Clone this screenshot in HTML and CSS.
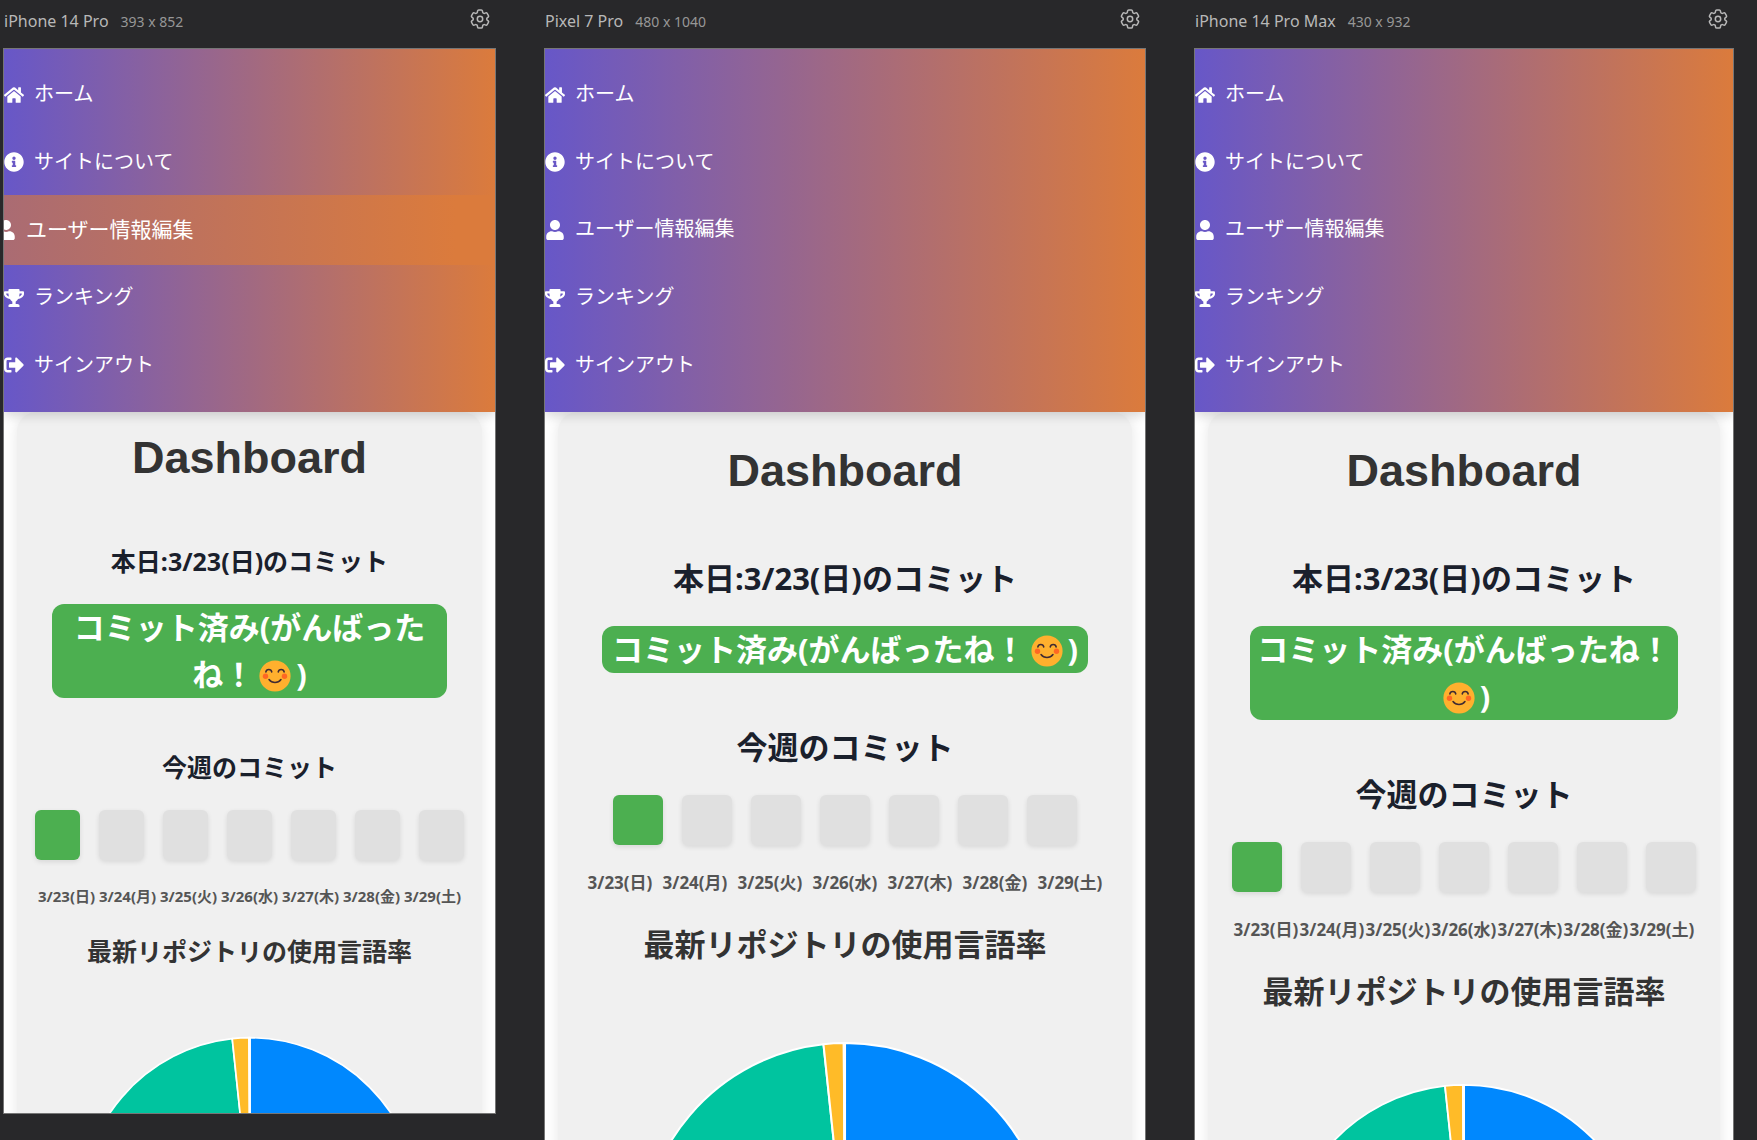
FILE: index.html
```html
<!DOCTYPE html>
<html lang="ja">
<head>
    <meta charset="UTF-8">
    <meta name="viewport" content="width=device-width, initial-scale=1.0">
    <title>Dashboard</title>
    <link rel="stylesheet" href="styles.css">
</head>
<body>
    <!-- shared icons -->
    <svg class="sprite" aria-hidden="true">
        <symbol id="gear" viewBox="2 2 20 20">
            <path fill="none" stroke="currentColor" stroke-width="1.5" stroke-linejoin="round" d="M9.594 3.94c.09-.542.56-.94 1.11-.94h2.593c.55 0 1.02.398 1.11.94l.213 1.281c.063.374.313.686.645.87.074.04.147.083.22.127.325.196.72.257 1.075.124l1.217-.456a1.125 1.125 0 0 1 1.37.49l1.296 2.247a1.125 1.125 0 0 1-.26 1.431l-1.003.827c-.293.241-.438.613-.43.992a7.723 7.723 0 0 1 0 .255c-.008.378.137.75.43.991l1.004.827c.424.35.534.955.26 1.43l-1.298 2.247a1.125 1.125 0 0 1-1.369.491l-1.217-.456c-.355-.133-.75-.072-1.076.124a6.47 6.47 0 0 1-.22.128c-.331.183-.581.495-.644.869l-.213 1.281c-.09.543-.56.94-1.11.94h-2.594c-.55 0-1.019-.398-1.11-.94l-.213-1.281c-.062-.374-.312-.686-.644-.87a6.52 6.52 0 0 1-.22-.127c-.325-.196-.72-.257-1.076-.124l-1.217.456a1.125 1.125 0 0 1-1.369-.49l-1.297-2.247a1.125 1.125 0 0 1 .26-1.431l1.004-.827c.292-.24.437-.613.43-.991a6.932 6.932 0 0 1 0-.255c.007-.38-.138-.751-.43-.992l-1.004-.827a1.125 1.125 0 0 1-.26-1.43l1.297-2.247a1.125 1.125 0 0 1 1.37-.491l1.216.456c.356.133.751.072 1.076-.124.072-.044.146-.086.22-.128.332-.183.582-.495.644-.869l.214-1.28Z"/>
            <circle cx="12" cy="12" r="2.7" fill="none" stroke="currentColor" stroke-width="1.5"/>
        </symbol>
        <symbol id="home" viewBox="0 0 576 512">
            <path d="M280.37 148.26L96 300.11V464a16 16 0 0 0 16 16l112.06-.29a16 16 0 0 0 15.92-16V368a16 16 0 0 1 16-16h64a16 16 0 0 1 16 16v95.64a16 16 0 0 0 16 16.05L464 480a16 16 0 0 0 16-16V300L295.67 148.26a12.19 12.19 0 0 0-15.3 0zM571.6 251.47L488 182.56V44.05a12 12 0 0 0-12-12h-56a12 12 0 0 0-12 12v72.61L318.47 43a48 48 0 0 0-61 0L4.34 251.47a12 12 0 0 0-1.6 16.9l25.5 31A12 12 0 0 0 45.15 301l235.22-193.74a12.19 12.19 0 0 1 15.3 0L530.9 301a12 12 0 0 0 16.9-1.6l25.5-31a12 12 0 0 0-1.7-16.93z"/>
        </symbol>
        <symbol id="info" viewBox="0 0 512 512">
            <path d="M256 8C119.043 8 8 119.083 8 256c0 136.997 111.043 248 248 248s248-111.003 248-248C504 119.083 392.957 8 256 8zm0 110c23.196 0 42 18.804 42 42s-18.804 42-42 42-42-18.804-42-42 18.804-42 42-42zm56 254c0 6.627-5.373 12-12 12h-88c-6.627 0-12-5.373-12-12v-24c0-6.627 5.373-12 12-12h12v-64h-12c-6.627 0-12-5.373-12-12v-24c0-6.627 5.373-12 12-12h64c6.627 0 12 5.373 12 12v100h12c6.627 0 12 5.373 12 12v24z"/>
        </symbol>
        <symbol id="user" viewBox="0 0 448 512">
            <path d="M224 256c70.7 0 128-57.3 128-128S294.7 0 224 0 96 57.3 96 128s57.3 128 128 128zm89.6 32h-16.7c-22.2 10.2-46.9 16-72.9 16s-50.6-5.8-72.9-16h-16.7C60.2 288 0 348.2 0 422.4V464c0 26.5 21.5 48 48 48h352c26.5 0 48-21.5 48-48v-41.6c0-74.2-60.2-134.4-134.4-134.4z"/>
        </symbol>
        <symbol id="trophy" viewBox="0 0 576 512">
            <path d="M552 64H448V24c0-13.3-10.7-24-24-24H152c-13.3 0-24 10.7-24 24v40H24C10.7 64 0 74.7 0 88v56c0 35.7 22.5 72.4 61.9 100.7 31.5 22.7 69.8 37.1 110 41.7C203.3 338.5 240 360 240 360v72h-48c-35.3 0-64 20.7-64 56v12c0 6.6 5.4 12 12 12h296c6.6 0 12-5.4 12-12v-12c0-35.3-28.7-56-64-56h-48v-72s36.7-21.5 68.1-73.6c40.3-4.6 78.6-19 110-41.7 39.3-28.3 61.9-65 61.9-100.7V88c0-13.3-10.7-24-24-24zM99.3 192.8C74.9 175.2 64 155.6 64 144v-16h64.2c1 32.6 5.8 61.2 12.8 86.2-15.1-5.2-29.2-12.4-41.7-21.4zM512 144c0 16.1-17.7 36.1-35.3 48.8-12.5 9-26.7 16.2-41.8 21.4 7-25 11.8-53.6 12.8-86.2H512v16z"/>
        </symbol>
        <symbol id="signout" viewBox="0 0 512 512">
            <path d="M497 273L329 441c-15 15-41 4.5-41-17v-96H152c-13.3 0-24-10.7-24-24v-96c0-13.3 10.7-24 24-24h136V88c0-21.4 25.9-32 41-17l168 168c9.3 9.4 9.3 24.6 0 34zM192 436v-40c0-6.6-5.4-12-12-12H96c-17.7 0-32-14.3-32-32V160c0-17.7 14.3-32 32-32h84c6.6 0 12-5.4 12-12V76c0-6.6-5.4-12-12-12H96c-53 0-96 43-96 96v192c0 53 43 96 96 96h84c6.6 0 12-5.4 12-12z"/>
        </symbol>
        <symbol id="smile" viewBox="0 0 32 32">
            <circle cx="16" cy="16" r="15.6" fill="#ffb02e"/>
            <circle cx="6.5" cy="16.3" r="2.7" fill="#ff6723"/>
            <circle cx="25.5" cy="16.3" r="2.7" fill="#ff6723"/>
            <path fill="none" stroke="#402a32" stroke-width="1.5" stroke-linecap="round" d="M6.8 12c.6-3.400 5.400-3.400 6 0M19.200 12c.6-3.400 5.400-3.400 6 0M10 19.500c3 4 9 4 12 0"/>
        </symbol>
        <symbol id="pie" viewBox="-101 -101 202 202">
            <path class="slice-blue" d="M0 0V-100A100 100 0 0 1 0 100Z"/>
            <path class="slice-teal" d="M0 0V100A100 100 0 0 1 -10.5 -99.4Z"/>
            <path class="slice-yellow" d="M0 0L-10.5 -99.4A100 100 0 0 1 -.6 -100Z"/>
            <path class="slice-orange" d="M0 0L-.6 -100H0Z"/>
        </symbol>
    </svg>

    <div class="workspace">
        <section class="device iphone-pro">
            <header class="device-bar">
                <span class="device-name">iPhone 14 Pro</span>
                <span class="device-size">393 x 852</span>
                <button type="button" class="gear" aria-label="Settings"><svg><use href="#gear"/></svg></button>
            </header>
            <div class="screen">
                <nav class="menu">
                    <ul>
                        <li><a href="#"><svg><use href="#home"/></svg>ホーム</a></li>
                        <li><a href="#"><svg><use href="#info"/></svg>サイトについて</a></li>
                        <li><a href="#" class="active"><svg><use href="#user"/></svg>ユーザー情報編集</a></li>
                        <li><a href="#"><svg><use href="#trophy"/></svg>ランキング</a></li>
                        <li><a href="#"><svg><use href="#signout"/></svg>サインアウト</a></li>
                    </ul>
                </nav>
                <main class="card">
                    <h1>Dashboard</h1>
                    <h2>本日:3/23(日)のコミット</h2>
                    <p class="status">コミット済み(がんばったね！<svg role="img" aria-label="😊"><use href="#smile"/></svg>)</p>
                    <h2>今週のコミット</h2>
                    <div class="week">
                        <span class="day done"></span>
                        <span class="day"></span>
                        <span class="day"></span>
                        <span class="day"></span>
                        <span class="day"></span>
                        <span class="day"></span>
                        <span class="day"></span>
                    </div>
                    <div class="dates">
                        <span>3/23(日)</span>
                        <span>3/24(月)</span>
                        <span>3/25(火)</span>
                        <span>3/26(水)</span>
                        <span>3/27(木)</span>
                        <span>3/28(金)</span>
                        <span>3/29(土)</span>
                    </div>
                    <h2 class="languages">最新リポジトリの使用言語率</h2>
                    <svg class="chart"><use href="#pie"/></svg>
                </main>
            </div>
        </section>

        <section class="device pixel-pro">
            <header class="device-bar">
                <span class="device-name">Pixel 7 Pro</span>
                <span class="device-size">480 x 1040</span>
                <button type="button" class="gear" aria-label="Settings"><svg><use href="#gear"/></svg></button>
            </header>
            <div class="screen">
                <nav class="menu">
                    <ul>
                        <li><a href="#"><svg><use href="#home"/></svg>ホーム</a></li>
                        <li><a href="#"><svg><use href="#info"/></svg>サイトについて</a></li>
                        <li><a href="#"><svg><use href="#user"/></svg>ユーザー情報編集</a></li>
                        <li><a href="#"><svg><use href="#trophy"/></svg>ランキング</a></li>
                        <li><a href="#"><svg><use href="#signout"/></svg>サインアウト</a></li>
                    </ul>
                </nav>
                <main class="card">
                    <h1>Dashboard</h1>
                    <h2>本日:3/23(日)のコミット</h2>
                    <p class="status">コミット済み(がんばったね！<svg role="img" aria-label="😊"><use href="#smile"/></svg>)</p>
                    <h2>今週のコミット</h2>
                    <div class="week">
                        <span class="day done"></span>
                        <span class="day"></span>
                        <span class="day"></span>
                        <span class="day"></span>
                        <span class="day"></span>
                        <span class="day"></span>
                        <span class="day"></span>
                    </div>
                    <div class="dates">
                        <span>3/23(日)</span>
                        <span>3/24(月)</span>
                        <span>3/25(火)</span>
                        <span>3/26(水)</span>
                        <span>3/27(木)</span>
                        <span>3/28(金)</span>
                        <span>3/29(土)</span>
                    </div>
                    <h2 class="languages">最新リポジトリの使用言語率</h2>
                    <svg class="chart"><use href="#pie"/></svg>
                </main>
            </div>
        </section>

        <section class="device iphone-max">
            <header class="device-bar">
                <span class="device-name">iPhone 14 Pro Max</span>
                <span class="device-size">430 x 932</span>
                <button type="button" class="gear" aria-label="Settings"><svg><use href="#gear"/></svg></button>
            </header>
            <div class="screen">
                <nav class="menu">
                    <ul>
                        <li><a href="#"><svg><use href="#home"/></svg>ホーム</a></li>
                        <li><a href="#"><svg><use href="#info"/></svg>サイトについて</a></li>
                        <li><a href="#"><svg><use href="#user"/></svg>ユーザー情報編集</a></li>
                        <li><a href="#"><svg><use href="#trophy"/></svg>ランキング</a></li>
                        <li><a href="#"><svg><use href="#signout"/></svg>サインアウト</a></li>
                    </ul>
                </nav>
                <main class="card">
                    <h1>Dashboard</h1>
                    <h2>本日:3/23(日)のコミット</h2>
                    <p class="status">コミット済み(がんばったね！<svg role="img" aria-label="😊"><use href="#smile"/></svg>)</p>
                    <h2>今週のコミット</h2>
                    <div class="week">
                        <span class="day done"></span>
                        <span class="day"></span>
                        <span class="day"></span>
                        <span class="day"></span>
                        <span class="day"></span>
                        <span class="day"></span>
                        <span class="day"></span>
                    </div>
                    <div class="dates">
                        <span>3/23(日)</span>
                        <span>3/24(月)</span>
                        <span>3/25(火)</span>
                        <span>3/26(水)</span>
                        <span>3/27(木)</span>
                        <span>3/28(金)</span>
                        <span>3/29(土)</span>
                    </div>
                    <h2 class="languages">最新リポジトリの使用言語率</h2>
                    <svg class="chart"><use href="#pie"/></svg>
                </main>
            </div>
        </section>
    </div>
</body>
</html>
```

FILE: styles.css
```css
:root {
    --purple: #6757c8;
    --orange: #db7b3c;
    --green: #4caf50;
    --card: #f0f0f0;
    --page: #28282a;
}

* {
    margin: 0;
    padding: 0;
    box-sizing: border-box;
}

body {
    font-family: "Noto Sans", "Noto Sans CJK JP", sans-serif;
    background-color: var(--page);
    color: #1a202c;
}

.sprite {
    position: absolute;
    width: 0;
    height: 0;
}

.workspace {
    display: grid;
    grid-template-columns: 493fr 602fr 540fr;
    gap: 48px;
    align-items: start;
    height: 100vh;
    padding: 0 23px 0 3px;
    overflow: hidden;
}

/* per-device sizes */
.iphone-pro {
    --ratio: 393 / 852;
    --top: 19px;
    --heading: 25px;
    --heading-line: 38px;
    --side: 35px;
    --status-gap: 50px;
    --day: 45px;
    --date: 15px;
    --date-line: 24px;
    --date-col: 61px;
    --chart: 342px;
    --chart-gap: 66px;
}

.pixel-pro {
    --ratio: 480 / 1040;
    --top: 32px;
    --heading: 31px;
    --heading-line: 47px;
    --side: 44px;
    --status-gap: 51px;
    --day: 50px;
    --date: 17px;
    --date-line: 28px;
    --date-col: 75px;
    --chart: 414px;
    --chart-gap: 73px;
}

.iphone-max {
    --ratio: 430 / 932;
    --top: 32px;
    --heading: 31px;
    --heading-line: 47px;
    --side: 42px;
    --status-gap: 51px;
    --day: 50px;
    --date: 17px;
    --date-line: 28px;
    --date-col: 66px;
    --chart: 366px;
    --chart-gap: 68px;
}

.device-bar {
    display: flex;
    align-items: center;
    gap: 12px;
    height: 48px;
    padding: 0 6px 6px 1px;
    color: #b8b8b8;
}

.device-name {
    font-size: 16px;
}

.device-size {
    font-size: 14px;
    color: #979797;
}

.gear {
    display: flex;
    margin: 0 0 4px auto;
    border: none;
    background: none;
    color: #b8b8b8;
    cursor: pointer;
}

.gear svg {
    width: 20px;
    height: 20px;
}

.screen {
    box-sizing: content-box;
    aspect-ratio: var(--ratio);
    min-height: 0;
    border: 1px solid #767676;
    background-color: #fff;
    overflow: hidden;
}

.menu {
    position: relative;
    z-index: 1;
    background: linear-gradient(90deg, var(--purple), var(--orange));
    box-shadow: 0 4px 10px rgba(0, 0, 0, 0.15);
}

.menu ul {
    display: flex;
    flex-direction: column;
    height: 363px;
    padding: 11px 0 14px;
    list-style: none;
}

.menu li {
    display: flex;
    flex: 1;
}

.menu a {
    display: flex;
    flex: 1;
    align-items: center;
    gap: 10px;
    padding-bottom: 2px;
    color: #fff;
    font-size: 20px;
    text-decoration: none;
}

.menu a svg {
    width: 20px;
    height: 20px;
    margin-top: 4px;
    fill: currentColor;
}

.menu a.active {
    margin: 0 0 -2px -8px;
    padding-bottom: 4px;
    background: linear-gradient(90deg, #a96b74, var(--orange) 92%);
    font-size: 21px;
}

.card {
    margin: 0 13px;
    padding-top: var(--top);
    border-radius: 20px;
    background-color: var(--card);
    box-shadow: 0 0 14px rgba(0, 0, 0, 0.1);
    text-align: center;
}

.card h1 {
    margin-bottom: 57px;
    color: #333;
    font-family: "Liberation Sans", Arial, sans-serif;
    font-size: 45px;
    line-height: 54px;
}

.card h2 {
    font-size: var(--heading);
    line-height: var(--heading-line);
}

.card .languages {
    color: #333;
}

.status {
    margin: 24px var(--side) var(--status-gap);
    padding: 0 6px;
    border-radius: 12px;
    background-color: var(--green);
    color: #fff;
    font-size: 31px;
    font-weight: bold;
    line-height: 47px;
}

.status svg {
    width: 32px;
    height: 32px;
    margin: 0 5px;
    vertical-align: -6px;
}

.week {
    display: flex;
    justify-content: center;
    gap: 19px;
    margin: 24px 0;
}

.day {
    width: var(--day);
    height: 50px;
    border-radius: 6px;
    background-color: #e0e0e0;
    box-shadow: 0 2px 5px rgba(0, 0, 0, 0.1);
}

.day.done {
    background-color: var(--green);
}

.dates {
    display: grid;
    grid-template-columns: repeat(7, var(--date-col));
    justify-content: center;
    margin-bottom: 24px;
    color: #555;
    font-size: var(--date);
    font-weight: bold;
    line-height: var(--date-line);
    white-space: nowrap;
}

.chart {
    display: block;
    width: var(--chart);
    height: var(--chart);
    margin: var(--chart-gap) auto 0;
    stroke: #fff;
    stroke-width: 1;
}

.slice-blue {
    fill: #0088fe;
}

.slice-teal {
    fill: #00c49f;
}

.slice-yellow {
    fill: #ffbb28;
}

.slice-orange {
    fill: #ff8042;
}
```
